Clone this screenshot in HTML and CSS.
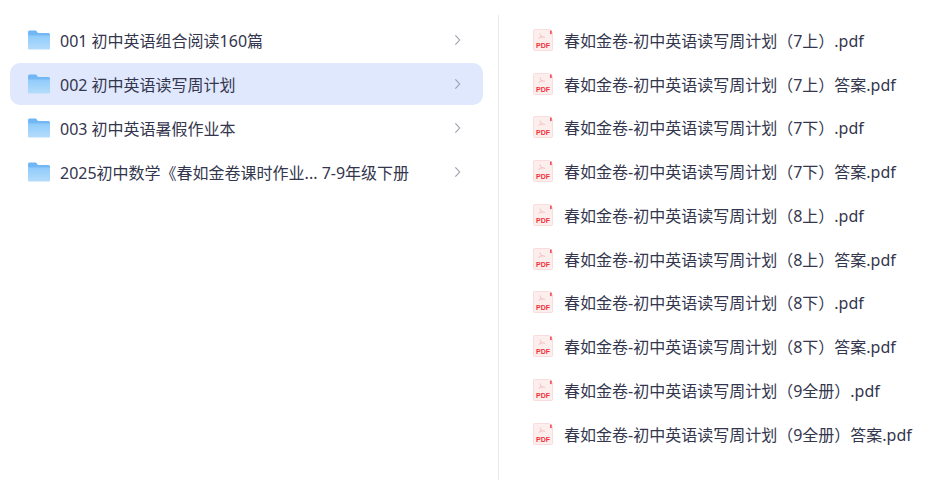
FILE: index.html
```html
<!DOCTYPE html>
<html lang="zh">
<head>
  <meta charset="UTF-8">
  <meta name="viewport" content="width=device-width, initial-scale=1.0">
  <title>初中英语读写周计划</title>
  <link rel="stylesheet" href="styles.css">
</head>
<body>
  <svg class="defs" width="0" height="0">
    <defs>
      <linearGradient id="folder-back" x1="0" y1="0" x2="0" y2="1">
        <stop offset="0" stop-color="#6db4f4"/>
        <stop offset="1" stop-color="#8cc6f8"/>
      </linearGradient>
      <linearGradient id="folder-front" x1="0" y1="0" x2="0" y2="1">
        <stop offset="0" stop-color="#8fcbfb"/>
        <stop offset="1" stop-color="#b5dcfb"/>
      </linearGradient>
      <symbol id="folder" viewBox="0 0 22 20">
        <path d="M0 2a1.500 1.500 0 0 1 1.500-1.500h6.500l2 2.500h10.500a1.500 1.500 0 0 1 1.500 1.500v13.500a1 1 0 0 1-1 1h-19.500a1 1 0 0 1-1-1z" fill="url(#folder-back)"/>
        <path d="M0 5.500h22v13a1 1 0 0 1-1 1h-20a1 1 0 0 1-1-1z" fill="url(#folder-front)"/>
      </symbol>
      <symbol id="pdf" viewBox="0 0 20 22">
        <path d="M1.500.5h15l3 3v17a1 1 0 0 1-1 1h-17a1 1 0 0 1-1-1v-19a1 1 0 0 1 1-1z" fill="#fdeeee" stroke="#fadcdc"/>
        <rect x="17.200" y="1.500" width="1.400" height="3.600" fill="#f0323c"/>
        <path d="M7 4.500c.5 2 1 3.500 2.500 4.500M9 7.500l-3.500 2M9 7.500l3 1" fill="none" stroke="#f3b5b5" stroke-width=".8"/>
        <text x="10" y="18.500" class="pdf-mark">PDF</text>
      </symbol>
    </defs>
  </svg>

  <div class="browser">
    <ul class="folders">
      <li class="folder-row">
        <svg class="folder-icon"><use href="#folder"/></svg>
        <span class="folder-name">001 初中英语组合阅读160篇</span>
        <svg class="arrow" viewBox="0 0 8 14"><path d="M1.500 1.500 6.500 7l-5 5.500"/></svg>
      </li>
      <li class="folder-row active">
        <svg class="folder-icon"><use href="#folder"/></svg>
        <span class="folder-name">002 初中英语读写周计划</span>
        <svg class="arrow" viewBox="0 0 8 14"><path d="M1.500 1.500 6.500 7l-5 5.500"/></svg>
      </li>
      <li class="folder-row">
        <svg class="folder-icon"><use href="#folder"/></svg>
        <span class="folder-name">003 初中英语暑假作业本</span>
        <svg class="arrow" viewBox="0 0 8 14"><path d="M1.500 1.500 6.500 7l-5 5.500"/></svg>
      </li>
      <li class="folder-row">
        <svg class="folder-icon"><use href="#folder"/></svg>
        <span class="folder-name">2025初中数学《春如金卷课时作业... 7-9年级下册</span>
        <svg class="arrow" viewBox="0 0 8 14"><path d="M1.500 1.500 6.500 7l-5 5.500"/></svg>
      </li>
    </ul>

    <ul class="files">
      <li class="file-row"><svg class="pdf-icon"><use href="#pdf"/></svg><span>春如金卷-初中英语读写周计划（7上）.pdf</span></li>
      <li class="file-row"><svg class="pdf-icon"><use href="#pdf"/></svg><span>春如金卷-初中英语读写周计划（7上）答案.pdf</span></li>
      <li class="file-row"><svg class="pdf-icon"><use href="#pdf"/></svg><span>春如金卷-初中英语读写周计划（7下）.pdf</span></li>
      <li class="file-row"><svg class="pdf-icon"><use href="#pdf"/></svg><span>春如金卷-初中英语读写周计划（7下）答案.pdf</span></li>
      <li class="file-row"><svg class="pdf-icon"><use href="#pdf"/></svg><span>春如金卷-初中英语读写周计划（8上）.pdf</span></li>
      <li class="file-row"><svg class="pdf-icon"><use href="#pdf"/></svg><span>春如金卷-初中英语读写周计划（8上）答案.pdf</span></li>
      <li class="file-row"><svg class="pdf-icon"><use href="#pdf"/></svg><span>春如金卷-初中英语读写周计划（8下）.pdf</span></li>
      <li class="file-row"><svg class="pdf-icon"><use href="#pdf"/></svg><span>春如金卷-初中英语读写周计划（8下）答案.pdf</span></li>
      <li class="file-row"><svg class="pdf-icon"><use href="#pdf"/></svg><span>春如金卷-初中英语读写周计划（9全册）.pdf</span></li>
      <li class="file-row"><svg class="pdf-icon"><use href="#pdf"/></svg><span>春如金卷-初中英语读写周计划（9全册）答案.pdf</span></li>
    </ul>
  </div>
</body>
</html>
```

FILE: styles.css
```css
* {
  box-sizing: border-box;
}
html, body {
  height: 100%;
}
body {
  margin: 0;
  background-color: #fff;
  color: #33364d;
  font-family: "Noto Sans", "Noto Sans CJK SC", sans-serif;
  font-size: 16px;
  overflow: hidden;
}
ul {
  list-style: none;
  margin: 0;
}
.defs {
  position: absolute;
}
.browser {
  display: flex;
  height: 480px;
  padding-top: 15px;
}
.folders {
  width: 499px;
  padding: 4px 15px 0 10px;
  border-right: 1px solid #e8e8eb;
}
.folder-row {
  display: flex;
  align-items: center;
  height: 42px;
  margin-bottom: 2px;
  padding: 0 22px 0 18px;
  border-radius: 10px;
}
.folder-row.active {
  background-color: #e0e8fd;
}
.folder-icon {
  flex: none;
  width: 22px;
  height: 20px;
  margin-right: 10px;
}
.folder-name {
  flex: 1;
  white-space: nowrap;
}
.arrow {
  flex: none;
  width: 7px;
  height: 12px;
  fill: none;
  stroke: #9a9dab;
  stroke-width: 1.300;
}
.files {
  flex: 1;
  padding: 3px 0 0 34px;
}
.file-row {
  display: flex;
  align-items: center;
  height: 43.750px;
  white-space: nowrap;
}
.pdf-icon {
  flex: none;
  width: 20px;
  height: 22px;
  margin-right: 11px;
}
.pdf-mark {
  font-family: "Liberation Sans", sans-serif;
  font-size: 7px;
  font-weight: 700;
  fill: #f0323c;
  text-anchor: middle;
}
```
